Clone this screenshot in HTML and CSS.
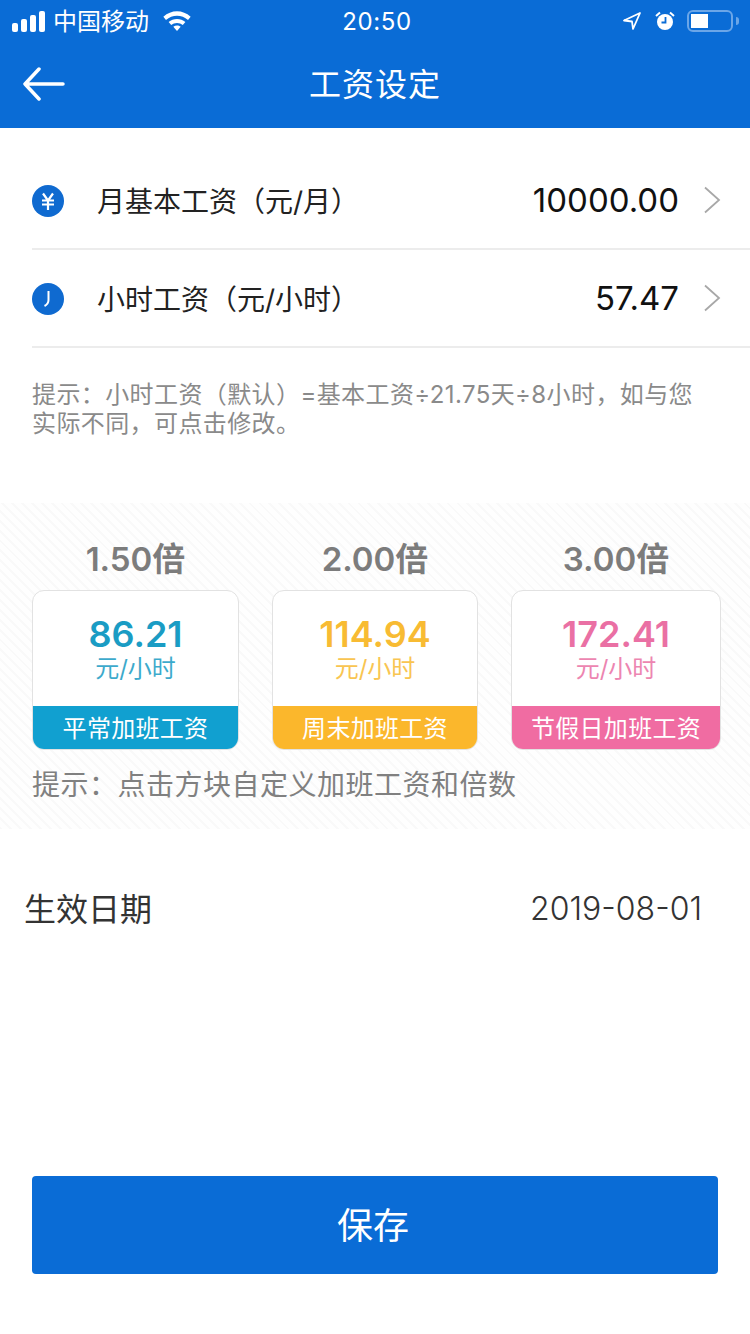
FILE: index.html
```html
<!DOCTYPE html>
<html lang="zh-CN">
<head>
    <meta charset="UTF-8">
    <meta name="viewport" content="width=device-width, initial-scale=1.0">
    <title>工资设定</title>
    <link rel="stylesheet" href="styles.css">
</head>
<body>
    <div class="header">
        <div class="status">
            <div class="status-left">
                <svg class="signal" width="34" height="21" viewBox="0 0 34 21">
                    <rect x="0" y="12" width="6" height="9" rx="2"/>
                    <rect x="9" y="8" width="6" height="13" rx="2"/>
                    <rect x="18" y="4" width="6" height="17" rx="2"/>
                    <rect x="27" y="0" width="6" height="21" rx="2"/>
                </svg>
                <span class="carrier">中国移动</span>
                <svg class="wifi" width="30" height="21" viewBox="0 0 28 20">
                    <path d="M1 6.500C8.500 -0.500 19.500 -0.500 27 6.500L24.500 9.500C18.500 4 9.500 4 3.500 9.500Z"/>
                    <path d="M6 11.500C10.500 7.500 17.500 7.500 22 11.500L19.500 14.300C16.500 11.700 11.500 11.700 8.500 14.300Z"/>
                    <path d="M10.500 16C12.500 14.300 15.500 14.300 17.500 16L14 20Z"/>
                </svg>
            </div>
            <div class="status-time">20:50</div>
            <div class="status-right">
                <svg class="location" width="20" height="20" viewBox="0 0 20 20">
                    <path d="M18 2L2 9.500L10 10.500L11 18Z" fill="none" stroke="#fff" stroke-width="1.800" stroke-linejoin="round"/>
                </svg>
                <svg class="alarm" width="20" height="20" viewBox="0 0 20 20">
                    <circle cx="10" cy="11" r="8" fill="#fff"/>
                    <path d="M1 5L5 1.500M19 5L15 1.500" stroke="#fff" stroke-width="2" fill="none"/>
                    <path d="M10.500 6V11.500H6.500" stroke="#0a6cd6" stroke-width="1.800" fill="none"/>
                </svg>
                <div class="battery"><div class="battery-level"></div></div>
                <div class="battery-tip"></div>
            </div>
        </div>
        <div class="navbar">
            <svg class="back" width="42" height="34" viewBox="0 0 42 34">
                <path d="M16 2L2 17L16 32M2 17H40" fill="none" stroke="#fff" stroke-width="3.500" stroke-linecap="round" stroke-linejoin="round"/>
            </svg>
            <h1>工资设定</h1>
        </div>
    </div>

    <div class="salary-list">
        <div class="salary-row">
            <div class="round-icon">
                <svg width="32" height="32" viewBox="0 0 32 32">
                    <path d="M11 8.500L16 15.500L21 8.500M10 15.500H22M10 19.500H22M16 15.500V25" fill="none" stroke="#fff" stroke-width="2.200"/>
                </svg>
            </div>
            <span class="row-label">月基本工资（元/月）</span>
            <span class="row-value">10000.00</span>
            <svg class="chevron" width="18" height="28" viewBox="0 0 18 28">
                <path d="M2 1.500L16 14L2 26.500" fill="none" stroke="#a8a8a8" stroke-width="1.800"/>
            </svg>
        </div>
        <div class="salary-row">
            <div class="round-icon">
                <svg width="32" height="32" viewBox="0 0 32 32">
                    <path d="M16.500 8V17C16.500 20 14.500 22 12.500 23" fill="none" stroke="#fff" stroke-width="2"/>
                </svg>
            </div>
            <span class="row-label">小时工资（元/小时）</span>
            <span class="row-value">57.47</span>
            <svg class="chevron" width="18" height="28" viewBox="0 0 18 28">
                <path d="M2 1.500L16 14L2 26.500" fill="none" stroke="#a8a8a8" stroke-width="1.800"/>
            </svg>
        </div>
    </div>

    <p class="tip">提示：小时工资（默认）=基本工资÷21.75天÷8小时，如与您实际不同，可点击修改。</p>

    <div class="overtime">
        <div class="cards">
            <div class="card-col blue">
                <div class="rate">1.50倍</div>
                <div class="card">
                    <div class="amount">86.21</div>
                    <div class="unit">元/小时</div>
                    <div class="card-title">平常加班工资</div>
                </div>
            </div>
            <div class="card-col yellow">
                <div class="rate">2.00倍</div>
                <div class="card">
                    <div class="amount">114.94</div>
                    <div class="unit">元/小时</div>
                    <div class="card-title">周末加班工资</div>
                </div>
            </div>
            <div class="card-col pink">
                <div class="rate">3.00倍</div>
                <div class="card">
                    <div class="amount">172.41</div>
                    <div class="unit">元/小时</div>
                    <div class="card-title">节假日加班工资</div>
                </div>
            </div>
        </div>
        <p class="overtime-tip">提示：点击方块自定义加班工资和倍数</p>
    </div>

    <div class="date-row">
        <span class="date-label">生效日期</span>
        <span class="date-value">2019-08-01</span>
    </div>

    <button class="save">保存</button>
</body>
</html>
```

FILE: styles.css
```css
* {
    box-sizing: border-box;
}
html, body {
    margin: 0;
    padding: 0;
}
body {
    width: 750px;
    height: 1334px;
    overflow: hidden;
    background-color: #fff;
    font-family: Inter, "Noto Sans CJK SC", sans-serif;
    color: #222;
}
.header {
    height: 128px;
    background-color: #0a6cd6;
    color: #fff;
}
.status {
    height: 40px;
    padding: 0 11px 0 12px;
    display: grid;
    grid-template-columns: 1fr auto 1fr;
    align-items: center;
}
.status-left {
    display: flex;
    align-items: center;
}
.signal {
    fill: #fff;
    margin-right: 7px;
}
.carrier {
    padding-top: 2px;
    font-size: 24px;
    line-height: 40px;
    font-weight: 400;
}
.wifi {
    fill: #fff;
    margin-left: 13px;
    margin-bottom: 2px;
}
.status-time {
    margin-left: 3px;
    font-size: 24px;
    letter-spacing: 0.6px;
}
.status-right {
    display: flex;
    align-items: center;
    justify-content: flex-end;
}
.location {
    margin-right: 13px;
}
.alarm {
    margin-right: 12px;
}
.battery {
    width: 46px;
    height: 22px;
    border: 2px solid #6ba6e8;
    border-radius: 6px;
    padding: 2px;
}
.battery-level {
    width: 17px;
    height: 14px;
    background-color: #fff;
}
.battery-tip {
    width: 3px;
    height: 8px;
    margin-left: 3px;
    background-color: #6ba6e8;
    border-radius: 0 3px 3px 0;
}
.navbar {
    height: 88px;
    display: flex;
    align-items: center;
    justify-content: center;
    padding-bottom: 4px;
    position: relative;
}
.back {
    position: absolute;
    left: 23px;
    top: 27px;
}
.navbar h1 {
    margin: 0;
    font-size: 32px;
    font-weight: 400;
    letter-spacing: 1px;
}
.salary-list {
    margin-top: 24px;
    margin-left: 32px;
}
.salary-row {
    height: 98px;
    display: flex;
    align-items: center;
    border-bottom: 2px solid #ececec;
    padding-right: 29px;
}
.round-icon {
    width: 32px;
    height: 32px;
    margin-top: 1px;
    border-radius: 50%;
    background-color: #0f6ad0;
    flex-shrink: 0;
}
.round-icon svg {
    display: block;
}
.row-label {
    margin-left: 33px;
    font-size: 28px;
    font-weight: 400;
    color: #222;
}
.row-value {
    margin-left: auto;
    font-size: 33px;
    color: #111;
}
.chevron {
    margin-left: 24px;
}
.tip {
    margin: 32px 50px 0 32px;
    font-size: 24px;
    line-height: 29px;
    font-weight: 400;
    letter-spacing: 0.4px;
    color: #8a8a8a;
}
.overtime {
    margin-top: 65px;
    height: 326px;
    padding: 32px 29px 0 32px;
    background-color: #fdfdfd;
    background-image: repeating-linear-gradient(45deg, #f9f9f9 0, #f9f9f9 2px, #fefefe 2px, #fefefe 7px);
}
.cards {
    display: grid;
    grid-template-columns: 207px 206px 210px;
    column-gap: 33px;
}
.rate {
    height: 55px;
    text-align: center;
    font-size: 33px;
    line-height: 48px;
    font-weight: 600;
    color: #7c7c7c;
}
.card {
    height: 160px;
    background-color: #fff;
    border: 1px solid #e2e2e2;
    border-radius: 12px;
    overflow: hidden;
    text-align: center;
    display: flex;
    flex-direction: column;
}
.amount {
    margin-top: 23px;
    font-size: 36px;
    line-height: 40px;
    font-weight: 600;
}
.unit {
    margin-top: 2px;
    font-size: 24px;
    line-height: 26px;
    font-weight: 400;
    opacity: 0.85;
}
.card-title {
    margin-top: auto;
    height: 43px;
    font-size: 24px;
    line-height: 46px;
    font-weight: 400;
    letter-spacing: 0.3px;
    color: #fff;
}
.blue .amount, .blue .unit {
    color: #1a9cc4;
}
.blue .card-title {
    background-color: #11a0d0;
}
.yellow .amount, .yellow .unit {
    color: #f8bb33;
}
.yellow .card-title {
    background-color: #fbb72c;
}
.pink .amount, .pink .unit {
    color: #ea70a4;
}
.pink .card-title {
    background-color: #f06ca2;
}
.overtime-tip {
    margin: 15px 0 0;
    font-size: 28px;
    line-height: 40px;
    font-weight: 400;
    letter-spacing: 0.5px;
    color: #808080;
}
.date-row {
    margin-top: 49px;
    padding: 0 48px 0 24px;
    display: flex;
    justify-content: space-between;
    align-items: center;
    height: 60px;
    color: #333;
}
.date-label {
    padding-bottom: 2px;
    font-size: 32px;
    font-weight: 400;
}
.date-value {
    font-size: 32px;
    font-weight: 300;
    padding-top: 1px;
}
.save {
    display: block;
    margin: 238px 0 0 32px;
    padding: 0 4px 4px 0;
    width: 686px;
    height: 98px;
    background-color: #0a6cd6;
    border: none;
    border-radius: 4px;
    color: #fff;
    font-family: "Noto Sans CJK SC", sans-serif;
    font-size: 36px;
    font-weight: 400;
}
```
